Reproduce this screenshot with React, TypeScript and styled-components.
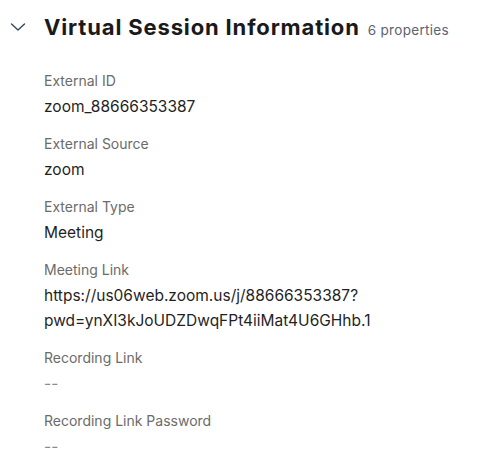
import styled, { createGlobalStyle } from "styled-components";

const GlobalStyle = createGlobalStyle`
    body {
        margin: 0;
        background: #ffffff;
        font-family: Inter, "Noto Sans", sans-serif;
        color: #1f1f1f;
    }
`;

const Section = styled.section`
    padding: 13px 0 0 10px;
`;

const Header = styled.div`
    display: flex;
    align-items: baseline;
    gap: 8px;
`;

const Toggle = styled.button`
    width: 16px;
    height: 20px;
    padding: 0;
    margin-right: 10px;
    border: none;
    background: none;
    display: flex;
    align-items: center;
    justify-content: flex-start;
    align-self: center;
    cursor: pointer;
    color: #33475b;
`;

const Title = styled.h2`
    margin: 0;
    font-size: 22px;
    font-weight: 700;
    line-height: 28px;
    color: #1a1a1a;
    letter-spacing: 0.85px;
`;

const Count = styled.span`
    font-size: 13.5px;
    color: #5c6270;
    letter-spacing: 0.3px;
`;

const Fields = styled.dl`
    margin: 30px 0 0 34px;
    padding: 0;
    display: flex;
    flex-direction: column;
    gap: 15px;
    max-width: 410px;
`;

const Field = styled.div`
    display: flex;
    flex-direction: column;
    gap: 3px;
`;

const Label = styled.dt`
    font-size: 14px;
    line-height: 20px;
    color: #6b6b6b;
`;

const Value = styled.dd<{ empty?: boolean }>`
    margin: 0;
    font-size: 15.5px;
    line-height: 25px;
    color: ${(props) => (props.empty ? "#8a8a8a" : "#1f1f1f")};
`;

const properties = [
    { label: "External ID", value: "zoom_88666353387" },
    { label: "External Source", value: "zoom" },
    { label: "External Type", value: "Meeting" },
    { label: "Meeting Link", value: "https://us06web.zoom.us/j/88666353387?pwd=ynXI3kJoUDZDwqFPt4iiMat4U6GHhb.1" },
    { label: "Recording Link", value: "" },
    { label: "Recording Link Password", value: "" },
];

const App = () => {
    return (
        <>
            <GlobalStyle />
            <Section>
                <Header>
                    <Toggle aria-label="Collapse section">
                        <svg width="16" height="8" viewBox="0 0 16 8" fill="none">
                            <path d="M1.5 1L8 7L14.5 1" stroke="currentColor" strokeWidth="1.4" strokeLinecap="round" strokeLinejoin="round" />
                        </svg>
                    </Toggle>
                    <Title>Virtual Session Information</Title>
                    <Count>{properties.length} properties</Count>
                </Header>
                <Fields>
                    {properties.map((p) => (
                        <Field key={p.label}>
                            <Label>{p.label}</Label>
                            <Value empty={!p.value}>{p.value || "--"}</Value>
                        </Field>
                    ))}
                </Fields>
            </Section>
        </>
    );
};

export default App;
